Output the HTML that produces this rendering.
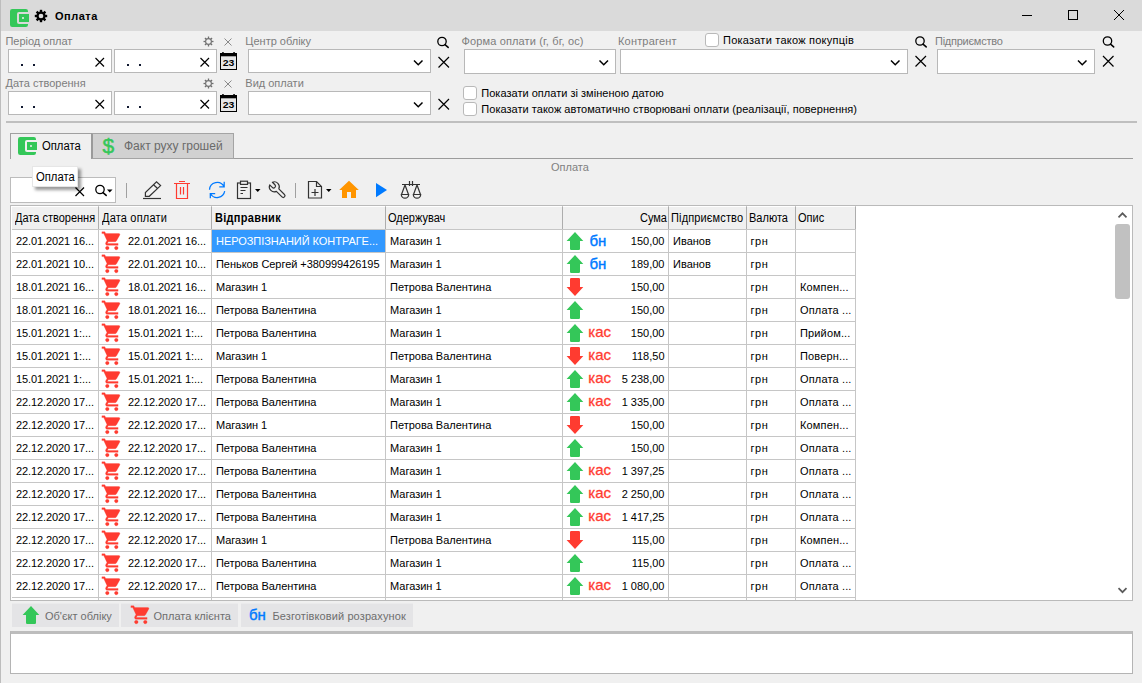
<!DOCTYPE html>
<html lang="uk"><head><meta charset="utf-8"><title>Оплата</title>
<style>
html,body{margin:0;padding:0}
body{width:1142px;height:683px;overflow:hidden;background:#f0f0f0;position:relative;font-family:"Liberation Sans",sans-serif;font-size:11px;color:#000}
.a{position:absolute}
.t{position:absolute;white-space:nowrap;line-height:1}
.lbl{color:#7d7d7d}
.inp{position:absolute;background:#fff;border:1px solid #b8b8b8;box-sizing:border-box}
.cb{position:absolute;width:14px;height:14px;box-sizing:border-box;background:#fff;border:1px solid #b9b9b9;border-radius:3px}
svg{position:absolute;overflow:visible}
.ic{fill:none;stroke:#000;stroke-width:1.3}
.hl{position:absolute;height:1px;background:#c6c6c6}
.vl{position:absolute;width:1px;background:#c6c6c6}
.c{position:absolute;white-space:nowrap;line-height:23px;height:23px;font-size:11px}
.d{letter-spacing:-0.1px}
.h{font-size:12px;transform:scaleX(0.917);transform-origin:0 0}
.r{text-align:right}
.kas{position:absolute;white-space:nowrap;line-height:1;font-size:15px;color:#ff3b30;-webkit-text-stroke:0.3px #ff3b30}
.bn{position:absolute;white-space:nowrap;line-height:1;font-size:15px;color:#007aff;-webkit-text-stroke:0.4px #007aff}
.leg{position:absolute;background:#e4e4e6;height:24px;top:603px;box-sizing:border-box;border-top:1px solid #ebebec}
.lt{position:absolute;white-space:nowrap;line-height:1;font-size:12px;color:#6e6e6e;top:610px}
</style></head>
<body>
<div class="a" style="left:0;top:0;width:1142px;height:31px;background:#dadada"></div>
<div class="a" style="left:0;top:0;width:1px;height:683px;background:#bdbdbd"></div>
<svg style="left:10px;top:9px" width="20" height="18" viewBox="0 0 20 18"><rect x="0" y="0" width="18" height="18" rx="2.2" fill="#34c759"/><path d="M9 3H19.5V15H9a2 2 0 0 1-2-2V5a2 2 0 0 1 2-2z" fill="#dadada"/><rect x="9" y="5" width="10" height="8" fill="#34c759"/><circle cx="13" cy="9" r="1" fill="#f2f2f2"/></svg>
<svg style="left:0;top:0" width="1" height="1"><g transform="translate(41 16)"><rect x="-1.18" y="-6.20" width="2.36" height="3.10" transform="rotate(0)" fill="#000"/><rect x="-1.18" y="-6.20" width="2.36" height="3.10" transform="rotate(45)" fill="#000"/><rect x="-1.18" y="-6.20" width="2.36" height="3.10" transform="rotate(90)" fill="#000"/><rect x="-1.18" y="-6.20" width="2.36" height="3.10" transform="rotate(135)" fill="#000"/><rect x="-1.18" y="-6.20" width="2.36" height="3.10" transform="rotate(180)" fill="#000"/><rect x="-1.18" y="-6.20" width="2.36" height="3.10" transform="rotate(225)" fill="#000"/><rect x="-1.18" y="-6.20" width="2.36" height="3.10" transform="rotate(270)" fill="#000"/><rect x="-1.18" y="-6.20" width="2.36" height="3.10" transform="rotate(315)" fill="#000"/><circle r="3.47" fill="none" stroke="#000" stroke-width="2.23"/></g></svg>
<div class="t " style="left:55px;top:11px;font-weight:bold;font-size:11px;letter-spacing:0.5px">Оплата</div>
<svg style="left:0;top:0" width="1" height="1"><path d="M1022 15.500H1032" stroke="#000" stroke-width="1"/><rect x="1068.500" y="10.500" width="9" height="9" fill="none" stroke="#000" stroke-width="1"/><path d="M1114 10L1124 20M1124 10L1114 20" stroke="#000" stroke-width="1"/></svg>
<div class="t lbl" style="left:5.5px;top:36px;letter-spacing:-0.05px">Період оплат</div>
<div class="t lbl" style="left:5.5px;top:78px;">Дата створення</div>
<div class="t lbl" style="left:245.3px;top:36px;">Центр обліку</div>
<div class="t lbl" style="left:245.3px;top:78px;">Вид оплати</div>
<div class="t lbl" style="left:461.5px;top:36px;letter-spacing:0.14px">Форма оплати (г, бг, ос)</div>
<div class="t lbl" style="left:618px;top:36px;letter-spacing:0.18px">Контрагент</div>
<div class="t lbl" style="left:935px;top:36px;letter-spacing:-0.25px">Підприємство</div>
<div class="t " style="left:723px;top:35px;letter-spacing:0.23px">Показати також покупців</div>
<div class="t " style="left:481.3px;top:88px;letter-spacing:0.02px">Показати оплати зі зміненою датою</div>
<div class="t " style="left:481.3px;top:104px;letter-spacing:0.03px">Показати також автоматично створювані оплати (реалізації, повернення)</div>
<div class="cb" style="left:705px;top:33px"></div>
<div class="cb" style="left:463px;top:86px"></div>
<div class="cb" style="left:463px;top:102px"></div>
<div class="inp" style="left:8px;top:49px;width:104px;height:24px"></div>
<div class="inp" style="left:114px;top:49px;width:103px;height:24px"></div>
<div class="a" style="left:21px;top:64px;width:2px;height:2px;background:#101830"></div>
<div class="a" style="left:33px;top:64px;width:2px;height:2px;background:#101830"></div>
<div class="a" style="left:127px;top:64px;width:2px;height:2px;background:#101830"></div>
<div class="a" style="left:139px;top:64px;width:2px;height:2px;background:#101830"></div>
<svg style="left:0;top:0" width="1" height="1"><path d="M95.5 58L104 66.5M104 58L95.5 66.5" fill="none" stroke="#000" stroke-width="1.2"/></svg>
<svg style="left:0;top:0" width="1" height="1"><path d="M200.5 58L209 66.5M209 58L200.5 66.5" fill="none" stroke="#000" stroke-width="1.2"/></svg>
<svg style="left:220px;top:52px" width="17" height="18" viewBox="0 0 17 18"><rect x="0.5" y="1.5" width="16" height="16" fill="#e6e6e6" stroke="#000" stroke-width="1"/><rect x="0" y="1" width="17" height="3.300" fill="#000"/><rect x="0" y="17" width="17" height="1" fill="#000"/><rect x="2.200" y="0" width="1.500" height="2" fill="#000"/><rect x="13.300" y="0" width="1.500" height="2" fill="#000"/><text x="2.700" y="14.400" textLength="11.600" lengthAdjust="spacingAndGlyphs" font-family="Liberation Sans, sans-serif" font-weight="bold" font-size="9" fill="#000">23</text></svg>
<svg style="left:0;top:0" width="1" height="1"><g transform="translate(208.5 41.5)"><path d="M0 -5V-3.2" transform="rotate(0)" stroke="#707070" stroke-width="1.3"/><path d="M0 -5V-3.2" transform="rotate(45)" stroke="#707070" stroke-width="1.3"/><path d="M0 -5V-3.2" transform="rotate(90)" stroke="#707070" stroke-width="1.3"/><path d="M0 -5V-3.2" transform="rotate(135)" stroke="#707070" stroke-width="1.3"/><path d="M0 -5V-3.2" transform="rotate(180)" stroke="#707070" stroke-width="1.3"/><path d="M0 -5V-3.2" transform="rotate(225)" stroke="#707070" stroke-width="1.3"/><path d="M0 -5V-3.2" transform="rotate(270)" stroke="#707070" stroke-width="1.3"/><path d="M0 -5V-3.2" transform="rotate(315)" stroke="#707070" stroke-width="1.3"/><circle r="2.9" fill="none" stroke="#707070" stroke-width="1.1"/></g></svg>
<svg style="left:0;top:0" width="1" height="1"><path d="M224.5 38.5L231.5 45.5M231.5 38.5L224.5 45.5" fill="none" stroke="#8a8a8a" stroke-width="1"/></svg>
<div class="inp" style="left:248px;top:49px;width:183px;height:24px"></div>
<svg style="left:0;top:0" width="1" height="1"><path d="M414 60.5L418.25 64.7L422.5 60.5" fill="none" stroke="#000" stroke-width="1.5"/></svg>
<svg style="left:0;top:0" width="1" height="1"><path d="M438.5 57L449 67.5M449 57L438.5 67.5" fill="none" stroke="#000" stroke-width="1.2"/></svg>
<div class="inp" style="left:8px;top:91px;width:104px;height:24px"></div>
<div class="inp" style="left:114px;top:91px;width:103px;height:24px"></div>
<div class="a" style="left:21px;top:106px;width:2px;height:2px;background:#101830"></div>
<div class="a" style="left:33px;top:106px;width:2px;height:2px;background:#101830"></div>
<div class="a" style="left:127px;top:106px;width:2px;height:2px;background:#101830"></div>
<div class="a" style="left:139px;top:106px;width:2px;height:2px;background:#101830"></div>
<svg style="left:0;top:0" width="1" height="1"><path d="M95.5 100L104 108.5M104 100L95.5 108.5" fill="none" stroke="#000" stroke-width="1.2"/></svg>
<svg style="left:0;top:0" width="1" height="1"><path d="M200.5 100L209 108.5M209 100L200.5 108.5" fill="none" stroke="#000" stroke-width="1.2"/></svg>
<svg style="left:220px;top:94px" width="17" height="18" viewBox="0 0 17 18"><rect x="0.5" y="1.5" width="16" height="16" fill="#e6e6e6" stroke="#000" stroke-width="1"/><rect x="0" y="1" width="17" height="3.300" fill="#000"/><rect x="0" y="17" width="17" height="1" fill="#000"/><rect x="2.200" y="0" width="1.500" height="2" fill="#000"/><rect x="13.300" y="0" width="1.500" height="2" fill="#000"/><text x="2.700" y="14.400" textLength="11.600" lengthAdjust="spacingAndGlyphs" font-family="Liberation Sans, sans-serif" font-weight="bold" font-size="9" fill="#000">23</text></svg>
<svg style="left:0;top:0" width="1" height="1"><g transform="translate(208.5 83.5)"><path d="M0 -5V-3.2" transform="rotate(0)" stroke="#707070" stroke-width="1.3"/><path d="M0 -5V-3.2" transform="rotate(45)" stroke="#707070" stroke-width="1.3"/><path d="M0 -5V-3.2" transform="rotate(90)" stroke="#707070" stroke-width="1.3"/><path d="M0 -5V-3.2" transform="rotate(135)" stroke="#707070" stroke-width="1.3"/><path d="M0 -5V-3.2" transform="rotate(180)" stroke="#707070" stroke-width="1.3"/><path d="M0 -5V-3.2" transform="rotate(225)" stroke="#707070" stroke-width="1.3"/><path d="M0 -5V-3.2" transform="rotate(270)" stroke="#707070" stroke-width="1.3"/><path d="M0 -5V-3.2" transform="rotate(315)" stroke="#707070" stroke-width="1.3"/><circle r="2.9" fill="none" stroke="#707070" stroke-width="1.1"/></g></svg>
<svg style="left:0;top:0" width="1" height="1"><path d="M224.5 80.5L231.5 87.5M231.5 80.5L224.5 87.5" fill="none" stroke="#8a8a8a" stroke-width="1"/></svg>
<div class="inp" style="left:248px;top:91px;width:183px;height:24px"></div>
<svg style="left:0;top:0" width="1" height="1"><path d="M414 102.5L418.25 106.7L422.5 102.5" fill="none" stroke="#000" stroke-width="1.5"/></svg>
<svg style="left:0;top:0" width="1" height="1"><path d="M438.5 99L449 109.5M449 99L438.5 109.5" fill="none" stroke="#000" stroke-width="1.2"/></svg>
<svg style="left:0;top:0" width="1" height="1"><circle cx="442.00" cy="41.50" r="4.20" fill="none" stroke="#000" stroke-width="1.3"/><path d="M445.00 44.60L448.20 47.40" stroke="#000" stroke-width="1.5" stroke-linecap="round"/></svg>
<div class="inp" style="left:464px;top:49px;width:152px;height:25px"></div>
<svg style="left:0;top:0" width="1" height="1"><path d="M599.5 60.5L603.75 64.7L608 60.5" fill="none" stroke="#000" stroke-width="1.5"/></svg>
<div class="inp" style="left:620px;top:49px;width:288px;height:25px"></div>
<svg style="left:0;top:0" width="1" height="1"><path d="M891 60.5L895.25 64.7L899.5 60.5" fill="none" stroke="#000" stroke-width="1.5"/></svg>
<svg style="left:0;top:0" width="1" height="1"><circle cx="920.00" cy="41.00" r="4.20" fill="none" stroke="#000" stroke-width="1.3"/><path d="M923.00 44.10L926.20 46.90" stroke="#000" stroke-width="1.5" stroke-linecap="round"/></svg>
<svg style="left:0;top:0" width="1" height="1"><path d="M915.5 56L926 66.5M926 56L915.5 66.5" fill="none" stroke="#000" stroke-width="1.2"/></svg>
<div class="inp" style="left:937px;top:49px;width:158px;height:25px"></div>
<svg style="left:0;top:0" width="1" height="1"><path d="M1078 60.5L1082.25 64.7L1086.5 60.5" fill="none" stroke="#000" stroke-width="1.5"/></svg>
<svg style="left:0;top:0" width="1" height="1"><circle cx="1107.50" cy="41.00" r="4.20" fill="none" stroke="#000" stroke-width="1.3"/><path d="M1110.50 44.10L1113.70 46.90" stroke="#000" stroke-width="1.5" stroke-linecap="round"/></svg>
<svg style="left:0;top:0" width="1" height="1"><path d="M1103 56L1113.5 66.5M1113.5 56L1103 66.5" fill="none" stroke="#000" stroke-width="1.2"/></svg>
<div class="a" style="left:6px;top:121px;width:1131px;height:2px;background:#bfbfbf"></div>
<div class="a" style="left:10px;top:133px;width:82px;height:26px;box-sizing:border-box;border:1px solid #a0a0a0;border-bottom:none;background:#f0f0f0"></div>
<div class="a" style="left:91px;top:133px;width:143px;height:26px;box-sizing:border-box;border:1px solid #a4a4a4;border-left:2px solid #9a9a9a;background:#d1d1d1"></div>
<div class="a" style="left:234px;top:158px;width:899px;height:1px;background:#9c9c9c"></div>
<svg style="left:18px;top:137px" width="20" height="18" viewBox="0 0 20 18"><rect x="0" y="0" width="18" height="18" rx="2.2" fill="#34c759"/><path d="M9 3H19.5V15H9a2 2 0 0 1-2-2V5a2 2 0 0 1 2-2z" fill="#f0f0f0"/><rect x="9" y="5" width="10" height="8" fill="#34c759"/><circle cx="13" cy="9" r="1" fill="#f2f2f2"/></svg>
<div class="t " style="left:42.3px;top:139.5px;font-size:12.5px;transform:scaleX(0.9);transform-origin:0 0">Оплата</div>
<div class="t " style="left:102.6px;top:134.5px;font-size:21px;color:#34c759;-webkit-text-stroke:0.5px #34c759">$</div>
<div class="t " style="left:124px;top:140px;font-size:12px;color:#6a6a6a">Факт руху грошей</div>
<div class="t " style="left:551px;top:162px;font-size:11px;color:#808080">Оплата</div>
<div class="inp" style="left:10px;top:177px;width:106px;height:26px;border-color:#bcbcbc"></div>
<svg style="left:0;top:0" width="1" height="1"><path d="M75.5 187.5L84 196M84 187.5L75.5 196" fill="none" stroke="#000" stroke-width="1.2"/></svg>
<svg style="left:0;top:0" width="1" height="1"><circle cx="100.00" cy="189.50" r="4.20" fill="none" stroke="#000" stroke-width="1.3"/><path d="M103.00 192.60L106.20 195.40" stroke="#000" stroke-width="1.5" stroke-linecap="round"/></svg>
<svg style="left:0;top:0" width="1" height="1"><path d="M107 189.500H112.500L109.750 192.500Z" fill="#000"/></svg>
<div class="a" style="left:126px;top:183px;width:1px;height:15px;background:#a0a0a0"></div>
<div class="a" style="left:295px;top:183px;width:1px;height:15px;background:#a0a0a0"></div>
<svg style="left:0;top:0" width="1" height="1"><g fill="none" stroke="#333" stroke-width="1.2"><path d="M143 198.500H161"/><path d="M145.400 196.300V192.500L156.500 181.800L160.600 185.600L149.300 196.300Z"/><path d="M153.500 184.700L157.600 188.500"/></g></svg>
<svg style="left:0;top:0" width="1" height="1"><g fill="none" stroke="#ff3b30" stroke-width="1.2"><path d="M179 181.500H185M174 183.500H190M176.500 183.500V198.500H187.500V183.500M180.500 187V194.600M183.500 187V194.600"/></g></svg>
<svg style="left:0;top:0" width="1" height="1"><g fill="none" stroke="#007aff" stroke-width="1.25"><path d="M209.500 189.800A7.700 7.700 0 0 1 224 186.500M224.200 181.800V186.800H219.300"/><path d="M224.700 191.200A7.700 7.700 0 0 1 210.500 193.700M210.300 198.300V193.500H215.200"/></g></svg>
<svg style="left:0;top:0" width="1" height="1"><g fill="none" stroke="#333" stroke-width="1.2"><rect x="237.500" y="183" width="13" height="15.500"/><rect x="240.500" y="181.200" width="7" height="3.200" fill="#f0f0f0"/><path d="M240.500 187.500H247.500M240.500 190.500H245.500M240.500 193.500H243"/></g><path d="M255 189H260.500L257.750 192Z" fill="#000"/></svg>
<svg style="left:0;top:0" width="1" height="1"><g transform="translate(274.3 186.800) rotate(45)" fill="none" stroke="#333" stroke-width="1.2" stroke-linejoin="round"><path d="M-4.600 -1.900A5 5 0 0 1 4.680 -1.750L12.600 -1.750A1.750 1.750 0 0 1 12.600 1.750L4.680 1.750A5 5 0 0 1 -4.600 1.900L-1 1.900A1.900 1.900 0 0 0 -1 -1.900Z"/></g></svg>
<svg style="left:0;top:0" width="1" height="1"><g fill="none" stroke="#333" stroke-width="1.2"><path d="M308.500 181.500H316.500L321.500 186.500V198H308.500Z"/><path d="M316.500 181.500V186.500H321.500"/><path d="M311.500 192.500H318.500M315 189V196"/></g><path d="M326 189H331.500L328.750 192Z" fill="#000"/></svg>
<svg style="left:0;top:0" width="1" height="1"><path d="M349 180.800L358.800 190H356V198H351V192H347V198H342V190H339.200Z" fill="#ff9500"/></svg>
<svg style="left:0;top:0" width="1" height="1"><path d="M376 183L387 190L376 197.300Z" fill="#007aff"/></svg>
<svg style="left:0;top:0" width="1" height="1"><g fill="none" stroke="#333" stroke-width="1.2"><path d="M402 184.500H420M409.500 181V186M412.500 181V186"/><path d="M405 185L401.500 194.500M405 185L408.500 194.500M417 185L413.500 194.500M417 185L420.500 194.500"/><path d="M401.300 194.500H408.700A3.700 3.700 0 0 1 401.300 194.500ZM413.300 194.500H420.700A3.700 3.700 0 0 1 413.300 194.500Z"/></g></svg>
<div class="a" style="left:10px;top:205px;width:1123px;height:396px;box-sizing:border-box;border:1px solid #bababa;background:#fff"></div>
<div class="a" style="left:12px;top:207px;width:843px;height:22px;background:#f0f0f0"></div>
<div class="hl" style="left:12px;top:229px;width:844px"></div>
<div class="hl" style="left:12px;top:252px;width:844px"></div>
<div class="hl" style="left:12px;top:275px;width:844px"></div>
<div class="hl" style="left:12px;top:298px;width:844px"></div>
<div class="hl" style="left:12px;top:321px;width:844px"></div>
<div class="hl" style="left:12px;top:344px;width:844px"></div>
<div class="hl" style="left:12px;top:367px;width:844px"></div>
<div class="hl" style="left:12px;top:390px;width:844px"></div>
<div class="hl" style="left:12px;top:413px;width:844px"></div>
<div class="hl" style="left:12px;top:436px;width:844px"></div>
<div class="hl" style="left:12px;top:459px;width:844px"></div>
<div class="hl" style="left:12px;top:482px;width:844px"></div>
<div class="hl" style="left:12px;top:505px;width:844px"></div>
<div class="hl" style="left:12px;top:528px;width:844px"></div>
<div class="hl" style="left:12px;top:551px;width:844px"></div>
<div class="hl" style="left:12px;top:574px;width:844px"></div>
<div class="hl" style="left:12px;top:597px;width:844px"></div>
<div class="vl" style="left:98px;top:206px;height:394px"></div>
<div class="vl" style="left:211px;top:206px;height:394px"></div>
<div class="vl" style="left:385px;top:206px;height:394px"></div>
<div class="vl" style="left:562px;top:206px;height:394px"></div>
<div class="vl" style="left:668px;top:206px;height:394px"></div>
<div class="vl" style="left:746px;top:206px;height:394px"></div>
<div class="vl" style="left:795px;top:206px;height:394px"></div>
<div class="vl" style="left:855px;top:206px;height:394px"></div>
<div class="vl" style="left:98px;top:207px;height:22px;background:#adadad"></div>
<div class="vl" style="left:211px;top:207px;height:22px;background:#adadad"></div>
<div class="vl" style="left:385px;top:207px;height:22px;background:#adadad"></div>
<div class="vl" style="left:562px;top:207px;height:22px;background:#adadad"></div>
<div class="vl" style="left:668px;top:207px;height:22px;background:#adadad"></div>
<div class="vl" style="left:746px;top:207px;height:22px;background:#adadad"></div>
<div class="vl" style="left:795px;top:207px;height:22px;background:#adadad"></div>
<div class="vl" style="left:855px;top:207px;height:22px;background:#adadad"></div>
<div class="c h" style="left:15px;top:207px;">Дата створення</div>
<div class="c h" style="left:102px;top:207px;letter-spacing:0.2px">Дата оплати</div>
<div class="c h" style="left:214.5px;top:207px;font-weight:bold;letter-spacing:0.3px">Відправник</div>
<div class="c h" style="left:388px;top:207px;">Одержувач</div>
<div class="c h" style="left:671px;top:207px;letter-spacing:0.15px">Підприємство</div>
<div class="c h" style="left:749px;top:207px;">Валюта</div>
<div class="c h" style="left:798px;top:207px;">Опис</div>
<div class="c r h" style="left:600px;width:67px;top:207px;transform-origin:100% 0">Сума</div>
<div class="a" style="left:212px;top:230px;width:173px;height:22px;background:#3399ff"></div>
<div class="c d" style="left:16px;top:230px">22.01.2021 16...</div>
<svg style="left:101.10px;top:230.40px" width="21.60" height="21.60" viewBox="0 0 24 24"><path fill="#ff3b30" stroke="#ff3b30" stroke-width="0.3" d="M7 18c-1.1 0-1.99.9-1.99 2S5.900 22 7 22s2-.9 2-2-.9-2-2-2zM1 2v2h2l3.600 7.590-1.350 2.450c-.16.28-.25.61-.25.96 0 1.100.9 2 2 2h12v-2H7.420c-.14 0-.25-.11-.25-.25l.03-.12.9-1.630h7.450c.75 0 1.410-.41 1.750-1.030l3.580-6.490c.08-.14.12-.31.12-.48 0-.55-.45-1-1-1H5.210l-.94-2H1zm16 16c-1.100 0-1.990.9-1.990 2s.89 2 1.990 2 2-.9 2-2-.9-2-2-2z"/></svg>
<div class="c d" style="left:128px;top:230px">22.01.2021 16...</div>
<div class="c" style="left:216px;top:230px;letter-spacing:-0.05px;color:#fff">НЕРОЗПІЗНАНИЙ КОНТРАГЕ...</div>
<div class="c" style="left:390px;top:230px">Магазин 1</div>
<svg style="left:566px;top:232px" width="18" height="18" viewBox="0 0 18 18"><path fill="#34c759" d="M9 0L17.300 9.100H14V16.800a1.2 1.2 0 0 1-1.200 1.200H5.200a1.2 1.2 0 0 1-1.200-1.200V9.100H0.600Z"/></svg>
<div class="bn" style="left:589.5px;top:233px">бн</div>
<div class="c r" style="left:600px;width:64.5px;top:230px">150,00</div>
<div class="c" style="left:673px;top:230px">Иванов</div>
<div class="c" style="left:750.5px;top:230px;letter-spacing:0.5px">грн</div>
<div class="c d" style="left:16px;top:253px">22.01.2021 10...</div>
<svg style="left:101.10px;top:253.40px" width="21.60" height="21.60" viewBox="0 0 24 24"><path fill="#ff3b30" stroke="#ff3b30" stroke-width="0.3" d="M7 18c-1.1 0-1.99.9-1.99 2S5.900 22 7 22s2-.9 2-2-.9-2-2-2zM1 2v2h2l3.600 7.590-1.350 2.450c-.16.28-.25.61-.25.96 0 1.100.9 2 2 2h12v-2H7.420c-.14 0-.25-.11-.25-.25l.03-.12.9-1.630h7.450c.75 0 1.410-.41 1.750-1.030l3.580-6.490c.08-.14.12-.31.12-.48 0-.55-.45-1-1-1H5.210l-.94-2H1zm16 16c-1.100 0-1.990.9-1.990 2s.89 2 1.990 2 2-.9 2-2-.9-2-2-2z"/></svg>
<div class="c d" style="left:128px;top:253px">22.01.2021 10...</div>
<div class="c" style="left:216px;top:253px;letter-spacing:-0.05px;">Пеньков Сергей +380999426195</div>
<div class="c" style="left:390px;top:253px">Магазин 1</div>
<svg style="left:566px;top:255px" width="18" height="18" viewBox="0 0 18 18"><path fill="#34c759" d="M9 0L17.300 9.100H14V16.800a1.2 1.2 0 0 1-1.200 1.200H5.200a1.2 1.2 0 0 1-1.200-1.200V9.100H0.600Z"/></svg>
<div class="bn" style="left:589.5px;top:256px">бн</div>
<div class="c r" style="left:600px;width:64.5px;top:253px">189,00</div>
<div class="c" style="left:673px;top:253px">Иванов</div>
<div class="c" style="left:750.5px;top:253px;letter-spacing:0.5px">грн</div>
<div class="c d" style="left:16px;top:276px">18.01.2021 16...</div>
<svg style="left:101.10px;top:276.40px" width="21.60" height="21.60" viewBox="0 0 24 24"><path fill="#ff3b30" stroke="#ff3b30" stroke-width="0.3" d="M7 18c-1.1 0-1.99.9-1.99 2S5.900 22 7 22s2-.9 2-2-.9-2-2-2zM1 2v2h2l3.600 7.590-1.350 2.450c-.16.28-.25.61-.25.96 0 1.100.9 2 2 2h12v-2H7.420c-.14 0-.25-.11-.25-.25l.03-.12.9-1.630h7.450c.75 0 1.410-.41 1.750-1.030l3.580-6.490c.08-.14.12-.31.12-.48 0-.55-.45-1-1-1H5.210l-.94-2H1zm16 16c-1.100 0-1.990.9-1.990 2s.89 2 1.990 2 2-.9 2-2-.9-2-2-2z"/></svg>
<div class="c d" style="left:128px;top:276px">18.01.2021 16...</div>
<div class="c" style="left:216px;top:276px;letter-spacing:-0.05px;">Магазин 1</div>
<div class="c" style="left:390px;top:276px">Петрова Валентина</div>
<svg style="left:566px;top:278px" width="18" height="18" viewBox="0 0 18 18"><path fill="#ff3b30" d="M9 18L17.300 8.900H14V1.200a1.2 1.2 0 0 0-1.200-1.200H5.200a1.2 1.2 0 0 0-1.200 1.200V8.900H0.600Z"/></svg>
<div class="c r" style="left:600px;width:64.5px;top:276px">150,00</div>
<div class="c" style="left:750.5px;top:276px;letter-spacing:0.5px">грн</div>
<div class="c" style="left:800px;top:276px;letter-spacing:0.15px">Компен...</div>
<div class="c d" style="left:16px;top:299px">18.01.2021 16...</div>
<svg style="left:101.10px;top:299.40px" width="21.60" height="21.60" viewBox="0 0 24 24"><path fill="#ff3b30" stroke="#ff3b30" stroke-width="0.3" d="M7 18c-1.1 0-1.99.9-1.99 2S5.900 22 7 22s2-.9 2-2-.9-2-2-2zM1 2v2h2l3.600 7.590-1.350 2.450c-.16.28-.25.61-.25.96 0 1.100.9 2 2 2h12v-2H7.420c-.14 0-.25-.11-.25-.25l.03-.12.9-1.630h7.450c.75 0 1.410-.41 1.750-1.030l3.580-6.490c.08-.14.12-.31.12-.48 0-.55-.45-1-1-1H5.210l-.94-2H1zm16 16c-1.100 0-1.990.9-1.990 2s.89 2 1.990 2 2-.9 2-2-.9-2-2-2z"/></svg>
<div class="c d" style="left:128px;top:299px">18.01.2021 16...</div>
<div class="c" style="left:216px;top:299px;letter-spacing:-0.05px;">Петрова Валентина</div>
<div class="c" style="left:390px;top:299px">Магазин 1</div>
<svg style="left:566px;top:301px" width="18" height="18" viewBox="0 0 18 18"><path fill="#34c759" d="M9 0L17.300 9.100H14V16.800a1.2 1.2 0 0 1-1.200 1.200H5.200a1.2 1.2 0 0 1-1.200-1.200V9.100H0.600Z"/></svg>
<div class="c r" style="left:600px;width:64.5px;top:299px">150,00</div>
<div class="c" style="left:750.5px;top:299px;letter-spacing:0.5px">грн</div>
<div class="c" style="left:800px;top:299px;letter-spacing:0.15px">Оплата ...</div>
<div class="c d" style="left:16px;top:322px">15.01.2021 1:...</div>
<svg style="left:101.10px;top:322.40px" width="21.60" height="21.60" viewBox="0 0 24 24"><path fill="#ff3b30" stroke="#ff3b30" stroke-width="0.3" d="M7 18c-1.1 0-1.99.9-1.99 2S5.900 22 7 22s2-.9 2-2-.9-2-2-2zM1 2v2h2l3.600 7.590-1.350 2.450c-.16.28-.25.61-.25.96 0 1.100.9 2 2 2h12v-2H7.420c-.14 0-.25-.11-.25-.25l.03-.12.9-1.630h7.450c.75 0 1.410-.41 1.750-1.030l3.580-6.490c.08-.14.12-.31.12-.48 0-.55-.45-1-1-1H5.210l-.94-2H1zm16 16c-1.100 0-1.990.9-1.990 2s.89 2 1.990 2 2-.9 2-2-.9-2-2-2z"/></svg>
<div class="c d" style="left:128px;top:322px">15.01.2021 1:...</div>
<div class="c" style="left:216px;top:322px;letter-spacing:-0.05px;">Петрова Валентина</div>
<div class="c" style="left:390px;top:322px">Магазин 1</div>
<svg style="left:566px;top:324px" width="18" height="18" viewBox="0 0 18 18"><path fill="#34c759" d="M9 0L17.300 9.100H14V16.800a1.2 1.2 0 0 1-1.200 1.200H5.200a1.2 1.2 0 0 1-1.200-1.200V9.100H0.600Z"/></svg>
<div class="kas" style="left:588.3px;top:324px">кас</div>
<div class="c r" style="left:600px;width:64.5px;top:322px">150,00</div>
<div class="c" style="left:750.5px;top:322px;letter-spacing:0.5px">грн</div>
<div class="c" style="left:800px;top:322px;letter-spacing:0.15px">Прийом...</div>
<div class="c d" style="left:16px;top:345px">15.01.2021 1:...</div>
<svg style="left:101.10px;top:345.40px" width="21.60" height="21.60" viewBox="0 0 24 24"><path fill="#ff3b30" stroke="#ff3b30" stroke-width="0.3" d="M7 18c-1.1 0-1.99.9-1.99 2S5.900 22 7 22s2-.9 2-2-.9-2-2-2zM1 2v2h2l3.600 7.590-1.350 2.450c-.16.28-.25.61-.25.96 0 1.100.9 2 2 2h12v-2H7.420c-.14 0-.25-.11-.25-.25l.03-.12.9-1.630h7.450c.75 0 1.410-.41 1.750-1.030l3.580-6.490c.08-.14.12-.31.12-.48 0-.55-.45-1-1-1H5.210l-.94-2H1zm16 16c-1.100 0-1.990.9-1.990 2s.89 2 1.990 2 2-.9 2-2-.9-2-2-2z"/></svg>
<div class="c d" style="left:128px;top:345px">15.01.2021 1:...</div>
<div class="c" style="left:216px;top:345px;letter-spacing:-0.05px;">Магазин 1</div>
<div class="c" style="left:390px;top:345px">Петрова Валентина</div>
<svg style="left:566px;top:347px" width="18" height="18" viewBox="0 0 18 18"><path fill="#ff3b30" d="M9 18L17.300 8.900H14V1.200a1.2 1.2 0 0 0-1.200-1.200H5.200a1.2 1.2 0 0 0-1.200 1.200V8.900H0.600Z"/></svg>
<div class="kas" style="left:588.3px;top:347px">кас</div>
<div class="c r" style="left:600px;width:64.5px;top:345px">118,50</div>
<div class="c" style="left:750.5px;top:345px;letter-spacing:0.5px">грн</div>
<div class="c" style="left:800px;top:345px;letter-spacing:0.15px">Поверн...</div>
<div class="c d" style="left:16px;top:368px">15.01.2021 1:...</div>
<svg style="left:101.10px;top:368.40px" width="21.60" height="21.60" viewBox="0 0 24 24"><path fill="#ff3b30" stroke="#ff3b30" stroke-width="0.3" d="M7 18c-1.1 0-1.99.9-1.99 2S5.900 22 7 22s2-.9 2-2-.9-2-2-2zM1 2v2h2l3.600 7.590-1.350 2.450c-.16.28-.25.61-.25.96 0 1.100.9 2 2 2h12v-2H7.420c-.14 0-.25-.11-.25-.25l.03-.12.9-1.630h7.450c.75 0 1.410-.41 1.750-1.030l3.580-6.490c.08-.14.12-.31.12-.48 0-.55-.45-1-1-1H5.210l-.94-2H1zm16 16c-1.100 0-1.990.9-1.990 2s.89 2 1.990 2 2-.9 2-2-.9-2-2-2z"/></svg>
<div class="c d" style="left:128px;top:368px">15.01.2021 1:...</div>
<div class="c" style="left:216px;top:368px;letter-spacing:-0.05px;">Петрова Валентина</div>
<div class="c" style="left:390px;top:368px">Магазин 1</div>
<svg style="left:566px;top:370px" width="18" height="18" viewBox="0 0 18 18"><path fill="#34c759" d="M9 0L17.300 9.100H14V16.800a1.2 1.2 0 0 1-1.200 1.200H5.200a1.2 1.2 0 0 1-1.200-1.200V9.100H0.600Z"/></svg>
<div class="kas" style="left:588.3px;top:370px">кас</div>
<div class="c r" style="left:600px;width:64.5px;top:368px">5 238,00</div>
<div class="c" style="left:750.5px;top:368px;letter-spacing:0.5px">грн</div>
<div class="c" style="left:800px;top:368px;letter-spacing:0.15px">Оплата ...</div>
<div class="c d" style="left:16px;top:391px">22.12.2020 17...</div>
<svg style="left:101.10px;top:391.40px" width="21.60" height="21.60" viewBox="0 0 24 24"><path fill="#ff3b30" stroke="#ff3b30" stroke-width="0.3" d="M7 18c-1.1 0-1.99.9-1.99 2S5.900 22 7 22s2-.9 2-2-.9-2-2-2zM1 2v2h2l3.600 7.590-1.350 2.450c-.16.28-.25.61-.25.96 0 1.100.9 2 2 2h12v-2H7.420c-.14 0-.25-.11-.25-.25l.03-.12.9-1.630h7.450c.75 0 1.410-.41 1.750-1.030l3.580-6.490c.08-.14.12-.31.12-.48 0-.55-.45-1-1-1H5.210l-.94-2H1zm16 16c-1.100 0-1.990.9-1.990 2s.89 2 1.990 2 2-.9 2-2-.9-2-2-2z"/></svg>
<div class="c d" style="left:128px;top:391px">22.12.2020 17...</div>
<div class="c" style="left:216px;top:391px;letter-spacing:-0.05px;">Петрова Валентина</div>
<div class="c" style="left:390px;top:391px">Магазин 1</div>
<svg style="left:566px;top:393px" width="18" height="18" viewBox="0 0 18 18"><path fill="#34c759" d="M9 0L17.300 9.100H14V16.800a1.2 1.2 0 0 1-1.200 1.200H5.200a1.2 1.2 0 0 1-1.200-1.200V9.100H0.600Z"/></svg>
<div class="kas" style="left:588.3px;top:393px">кас</div>
<div class="c r" style="left:600px;width:64.5px;top:391px">1 335,00</div>
<div class="c" style="left:750.5px;top:391px;letter-spacing:0.5px">грн</div>
<div class="c" style="left:800px;top:391px;letter-spacing:0.15px">Оплата ...</div>
<div class="c d" style="left:16px;top:414px">22.12.2020 17...</div>
<svg style="left:101.10px;top:414.40px" width="21.60" height="21.60" viewBox="0 0 24 24"><path fill="#ff3b30" stroke="#ff3b30" stroke-width="0.3" d="M7 18c-1.1 0-1.99.9-1.99 2S5.900 22 7 22s2-.9 2-2-.9-2-2-2zM1 2v2h2l3.600 7.590-1.350 2.450c-.16.28-.25.61-.25.96 0 1.100.9 2 2 2h12v-2H7.420c-.14 0-.25-.11-.25-.25l.03-.12.9-1.630h7.450c.75 0 1.410-.41 1.750-1.030l3.580-6.490c.08-.14.12-.31.12-.48 0-.55-.45-1-1-1H5.210l-.94-2H1zm16 16c-1.100 0-1.990.9-1.990 2s.89 2 1.990 2 2-.9 2-2-.9-2-2-2z"/></svg>
<div class="c d" style="left:128px;top:414px">22.12.2020 17...</div>
<div class="c" style="left:216px;top:414px;letter-spacing:-0.05px;">Магазин 1</div>
<div class="c" style="left:390px;top:414px">Петрова Валентина</div>
<svg style="left:566px;top:416px" width="18" height="18" viewBox="0 0 18 18"><path fill="#ff3b30" d="M9 18L17.300 8.900H14V1.200a1.2 1.2 0 0 0-1.200-1.200H5.200a1.2 1.2 0 0 0-1.200 1.200V8.900H0.600Z"/></svg>
<div class="c r" style="left:600px;width:64.5px;top:414px">150,00</div>
<div class="c" style="left:750.5px;top:414px;letter-spacing:0.5px">грн</div>
<div class="c" style="left:800px;top:414px;letter-spacing:0.15px">Компен...</div>
<div class="c d" style="left:16px;top:437px">22.12.2020 17...</div>
<svg style="left:101.10px;top:437.40px" width="21.60" height="21.60" viewBox="0 0 24 24"><path fill="#ff3b30" stroke="#ff3b30" stroke-width="0.3" d="M7 18c-1.1 0-1.99.9-1.99 2S5.900 22 7 22s2-.9 2-2-.9-2-2-2zM1 2v2h2l3.600 7.590-1.350 2.450c-.16.28-.25.61-.25.96 0 1.100.9 2 2 2h12v-2H7.420c-.14 0-.25-.11-.25-.25l.03-.12.9-1.630h7.450c.75 0 1.410-.41 1.750-1.030l3.580-6.490c.08-.14.12-.31.12-.48 0-.55-.45-1-1-1H5.210l-.94-2H1zm16 16c-1.100 0-1.990.9-1.990 2s.89 2 1.990 2 2-.9 2-2-.9-2-2-2z"/></svg>
<div class="c d" style="left:128px;top:437px">22.12.2020 17...</div>
<div class="c" style="left:216px;top:437px;letter-spacing:-0.05px;">Петрова Валентина</div>
<div class="c" style="left:390px;top:437px">Магазин 1</div>
<svg style="left:566px;top:439px" width="18" height="18" viewBox="0 0 18 18"><path fill="#34c759" d="M9 0L17.300 9.100H14V16.800a1.2 1.2 0 0 1-1.200 1.200H5.200a1.2 1.2 0 0 1-1.200-1.200V9.100H0.600Z"/></svg>
<div class="c r" style="left:600px;width:64.5px;top:437px">150,00</div>
<div class="c" style="left:750.5px;top:437px;letter-spacing:0.5px">грн</div>
<div class="c" style="left:800px;top:437px;letter-spacing:0.15px">Оплата ...</div>
<div class="c d" style="left:16px;top:460px">22.12.2020 17...</div>
<svg style="left:101.10px;top:460.40px" width="21.60" height="21.60" viewBox="0 0 24 24"><path fill="#ff3b30" stroke="#ff3b30" stroke-width="0.3" d="M7 18c-1.1 0-1.99.9-1.99 2S5.900 22 7 22s2-.9 2-2-.9-2-2-2zM1 2v2h2l3.600 7.590-1.350 2.450c-.16.28-.25.61-.25.96 0 1.100.9 2 2 2h12v-2H7.420c-.14 0-.25-.11-.25-.25l.03-.12.9-1.630h7.450c.75 0 1.410-.41 1.750-1.030l3.580-6.490c.08-.14.12-.31.12-.48 0-.55-.45-1-1-1H5.210l-.94-2H1zm16 16c-1.100 0-1.990.9-1.990 2s.89 2 1.990 2 2-.9 2-2-.9-2-2-2z"/></svg>
<div class="c d" style="left:128px;top:460px">22.12.2020 17...</div>
<div class="c" style="left:216px;top:460px;letter-spacing:-0.05px;">Петрова Валентина</div>
<div class="c" style="left:390px;top:460px">Магазин 1</div>
<svg style="left:566px;top:462px" width="18" height="18" viewBox="0 0 18 18"><path fill="#34c759" d="M9 0L17.300 9.100H14V16.800a1.2 1.2 0 0 1-1.200 1.200H5.200a1.2 1.2 0 0 1-1.200-1.200V9.100H0.600Z"/></svg>
<div class="kas" style="left:588.3px;top:462px">кас</div>
<div class="c r" style="left:600px;width:64.5px;top:460px">1 397,25</div>
<div class="c" style="left:750.5px;top:460px;letter-spacing:0.5px">грн</div>
<div class="c" style="left:800px;top:460px;letter-spacing:0.15px">Оплата ...</div>
<div class="c d" style="left:16px;top:483px">22.12.2020 17...</div>
<svg style="left:101.10px;top:483.40px" width="21.60" height="21.60" viewBox="0 0 24 24"><path fill="#ff3b30" stroke="#ff3b30" stroke-width="0.3" d="M7 18c-1.1 0-1.99.9-1.99 2S5.900 22 7 22s2-.9 2-2-.9-2-2-2zM1 2v2h2l3.600 7.590-1.350 2.450c-.16.28-.25.61-.25.96 0 1.100.9 2 2 2h12v-2H7.420c-.14 0-.25-.11-.25-.25l.03-.12.9-1.630h7.450c.75 0 1.410-.41 1.750-1.030l3.580-6.490c.08-.14.12-.31.12-.48 0-.55-.45-1-1-1H5.210l-.94-2H1zm16 16c-1.100 0-1.990.9-1.990 2s.89 2 1.990 2 2-.9 2-2-.9-2-2-2z"/></svg>
<div class="c d" style="left:128px;top:483px">22.12.2020 17...</div>
<div class="c" style="left:216px;top:483px;letter-spacing:-0.05px;">Петрова Валентина</div>
<div class="c" style="left:390px;top:483px">Магазин 1</div>
<svg style="left:566px;top:485px" width="18" height="18" viewBox="0 0 18 18"><path fill="#34c759" d="M9 0L17.300 9.100H14V16.800a1.2 1.2 0 0 1-1.200 1.200H5.200a1.2 1.2 0 0 1-1.200-1.200V9.100H0.600Z"/></svg>
<div class="kas" style="left:588.3px;top:485px">кас</div>
<div class="c r" style="left:600px;width:64.5px;top:483px">2 250,00</div>
<div class="c" style="left:750.5px;top:483px;letter-spacing:0.5px">грн</div>
<div class="c" style="left:800px;top:483px;letter-spacing:0.15px">Оплата ...</div>
<div class="c d" style="left:16px;top:506px">22.12.2020 17...</div>
<svg style="left:101.10px;top:506.40px" width="21.60" height="21.60" viewBox="0 0 24 24"><path fill="#ff3b30" stroke="#ff3b30" stroke-width="0.3" d="M7 18c-1.1 0-1.99.9-1.99 2S5.900 22 7 22s2-.9 2-2-.9-2-2-2zM1 2v2h2l3.600 7.590-1.350 2.450c-.16.28-.25.61-.25.96 0 1.100.9 2 2 2h12v-2H7.420c-.14 0-.25-.11-.25-.25l.03-.12.9-1.630h7.450c.75 0 1.410-.41 1.750-1.030l3.580-6.490c.08-.14.12-.31.12-.48 0-.55-.45-1-1-1H5.210l-.94-2H1zm16 16c-1.100 0-1.990.9-1.990 2s.89 2 1.990 2 2-.9 2-2-.9-2-2-2z"/></svg>
<div class="c d" style="left:128px;top:506px">22.12.2020 17...</div>
<div class="c" style="left:216px;top:506px;letter-spacing:-0.05px;">Петрова Валентина</div>
<div class="c" style="left:390px;top:506px">Магазин 1</div>
<svg style="left:566px;top:508px" width="18" height="18" viewBox="0 0 18 18"><path fill="#34c759" d="M9 0L17.300 9.100H14V16.800a1.2 1.2 0 0 1-1.200 1.200H5.200a1.2 1.2 0 0 1-1.200-1.200V9.100H0.600Z"/></svg>
<div class="kas" style="left:588.3px;top:508px">кас</div>
<div class="c r" style="left:600px;width:64.5px;top:506px">1 417,25</div>
<div class="c" style="left:750.5px;top:506px;letter-spacing:0.5px">грн</div>
<div class="c" style="left:800px;top:506px;letter-spacing:0.15px">Оплата ...</div>
<div class="c d" style="left:16px;top:529px">22.12.2020 17...</div>
<svg style="left:101.10px;top:529.40px" width="21.60" height="21.60" viewBox="0 0 24 24"><path fill="#ff3b30" stroke="#ff3b30" stroke-width="0.3" d="M7 18c-1.1 0-1.99.9-1.99 2S5.900 22 7 22s2-.9 2-2-.9-2-2-2zM1 2v2h2l3.600 7.590-1.350 2.450c-.16.28-.25.61-.25.96 0 1.100.9 2 2 2h12v-2H7.420c-.14 0-.25-.11-.25-.25l.03-.12.9-1.630h7.450c.75 0 1.410-.41 1.750-1.030l3.580-6.490c.08-.14.12-.31.12-.48 0-.55-.45-1-1-1H5.210l-.94-2H1zm16 16c-1.100 0-1.990.9-1.990 2s.89 2 1.990 2 2-.9 2-2-.9-2-2-2z"/></svg>
<div class="c d" style="left:128px;top:529px">22.12.2020 17...</div>
<div class="c" style="left:216px;top:529px;letter-spacing:-0.05px;">Магазин 1</div>
<div class="c" style="left:390px;top:529px">Петрова Валентина</div>
<svg style="left:566px;top:531px" width="18" height="18" viewBox="0 0 18 18"><path fill="#ff3b30" d="M9 18L17.300 8.900H14V1.200a1.2 1.2 0 0 0-1.200-1.200H5.200a1.2 1.2 0 0 0-1.200 1.200V8.900H0.600Z"/></svg>
<div class="c r" style="left:600px;width:64.5px;top:529px">115,00</div>
<div class="c" style="left:750.5px;top:529px;letter-spacing:0.5px">грн</div>
<div class="c" style="left:800px;top:529px;letter-spacing:0.15px">Компен...</div>
<div class="c d" style="left:16px;top:552px">22.12.2020 17...</div>
<svg style="left:101.10px;top:552.40px" width="21.60" height="21.60" viewBox="0 0 24 24"><path fill="#ff3b30" stroke="#ff3b30" stroke-width="0.3" d="M7 18c-1.1 0-1.99.9-1.99 2S5.900 22 7 22s2-.9 2-2-.9-2-2-2zM1 2v2h2l3.600 7.590-1.350 2.450c-.16.28-.25.61-.25.96 0 1.100.9 2 2 2h12v-2H7.420c-.14 0-.25-.11-.25-.25l.03-.12.9-1.630h7.450c.75 0 1.410-.41 1.750-1.030l3.580-6.490c.08-.14.12-.31.12-.48 0-.55-.45-1-1-1H5.210l-.94-2H1zm16 16c-1.100 0-1.990.9-1.990 2s.89 2 1.990 2 2-.9 2-2-.9-2-2-2z"/></svg>
<div class="c d" style="left:128px;top:552px">22.12.2020 17...</div>
<div class="c" style="left:216px;top:552px;letter-spacing:-0.05px;">Петрова Валентина</div>
<div class="c" style="left:390px;top:552px">Магазин 1</div>
<svg style="left:566px;top:554px" width="18" height="18" viewBox="0 0 18 18"><path fill="#34c759" d="M9 0L17.300 9.100H14V16.800a1.2 1.2 0 0 1-1.200 1.200H5.200a1.2 1.2 0 0 1-1.200-1.200V9.100H0.600Z"/></svg>
<div class="c r" style="left:600px;width:64.5px;top:552px">115,00</div>
<div class="c" style="left:750.5px;top:552px;letter-spacing:0.5px">грн</div>
<div class="c" style="left:800px;top:552px;letter-spacing:0.15px">Оплата ...</div>
<div class="c d" style="left:16px;top:575px">22.12.2020 17...</div>
<svg style="left:101.10px;top:575.40px" width="21.60" height="21.60" viewBox="0 0 24 24"><path fill="#ff3b30" stroke="#ff3b30" stroke-width="0.3" d="M7 18c-1.1 0-1.99.9-1.99 2S5.900 22 7 22s2-.9 2-2-.9-2-2-2zM1 2v2h2l3.600 7.590-1.350 2.450c-.16.28-.25.61-.25.96 0 1.100.9 2 2 2h12v-2H7.420c-.14 0-.25-.11-.25-.25l.03-.12.9-1.630h7.450c.75 0 1.410-.41 1.750-1.030l3.580-6.490c.08-.14.12-.31.12-.48 0-.55-.45-1-1-1H5.210l-.94-2H1zm16 16c-1.100 0-1.990.9-1.990 2s.89 2 1.990 2 2-.9 2-2-.9-2-2-2z"/></svg>
<div class="c d" style="left:128px;top:575px">22.12.2020 17...</div>
<div class="c" style="left:216px;top:575px;letter-spacing:-0.05px;">Петрова Валентина</div>
<div class="c" style="left:390px;top:575px">Магазин 1</div>
<svg style="left:566px;top:577px" width="18" height="18" viewBox="0 0 18 18"><path fill="#34c759" d="M9 0L17.300 9.100H14V16.800a1.2 1.2 0 0 1-1.200 1.200H5.200a1.2 1.2 0 0 1-1.200-1.200V9.100H0.600Z"/></svg>
<div class="kas" style="left:588.3px;top:577px">кас</div>
<div class="c r" style="left:600px;width:64.5px;top:575px">1 080,00</div>
<div class="c" style="left:750.5px;top:575px;letter-spacing:0.5px">грн</div>
<div class="c" style="left:800px;top:575px;letter-spacing:0.15px">Оплата ...</div>
<div class="a" style="left:1115px;top:224px;width:15px;height:75px;border-radius:3px;background:#c1c1c1"></div>
<svg style="left:0;top:0" width="1" height="1"><path d="M1118.5 217.3L1122.5 213.3L1126.5 217.3" fill="none" stroke="#5a5a5a" stroke-width="1.7"/></svg>
<svg style="left:0;top:0" width="1" height="1"><path d="M1118.5 588.2L1122.5 592.2L1126.5 588.2" fill="none" stroke="#5a5a5a" stroke-width="1.7"/></svg>
<div class="leg" style="left:12px;width:107px"></div>
<div class="leg" style="left:121px;width:117px"></div>
<div class="leg" style="left:241px;width:172px"></div>
<svg style="left:22px;top:605.8px" width="18" height="18" viewBox="0 0 18 18"><path fill="#34c759" d="M9 0L17.300 9.100H14V16.800a1.2 1.2 0 0 1-1.200 1.200H5.200a1.2 1.2 0 0 1-1.200-1.200V9.100H0.600Z"/></svg>
<div class="t " style="left:45px;top:611px;font-size:11px;color:#6e6e6e">Об'єкт обліку</div>
<svg style="left:130.10px;top:604.40px" width="21.60" height="21.60" viewBox="0 0 24 24"><path fill="#ff3b30" stroke="#ff3b30" stroke-width="0.3" d="M7 18c-1.1 0-1.99.9-1.99 2S5.900 22 7 22s2-.9 2-2-.9-2-2-2zM1 2v2h2l3.600 7.590-1.350 2.450c-.16.28-.25.61-.25.96 0 1.100.9 2 2 2h12v-2H7.420c-.14 0-.25-.11-.25-.25l.03-.12.9-1.630h7.450c.75 0 1.410-.41 1.750-1.030l3.580-6.490c.08-.14.12-.31.12-.48 0-.55-.45-1-1-1H5.210l-.94-2H1zm16 16c-1.100 0-1.990.9-1.990 2s.89 2 1.990 2 2-.9 2-2-.9-2-2-2z"/></svg>
<div class="t " style="left:153.5px;top:611px;font-size:11px;color:#6e6e6e">Оплата клієнта</div>
<div class="t " style="left:249px;top:607px;font-size:15px;color:#007aff;-webkit-text-stroke:0.4px #007aff">бн</div>
<div class="t " style="left:272.5px;top:611px;font-size:11px;color:#6e6e6e;letter-spacing:0.11px">Безготівковий розрахунок</div>
<div class="a" style="left:10px;top:631px;width:1123px;height:43px;box-sizing:border-box;border:1px solid #b4b4b4;border-top:3px solid #bdbdbd;background:#fff"></div>
<div class="a" style="left:32px;top:166px;width:46px;height:21px;box-sizing:border-box;border:1px solid #e6e6e6;background:#fff;box-shadow:3px 3px 3px rgba(0,0,0,0.4)"></div>
<div class="t " style="left:35.8px;top:170.5px;font-size:12.5px;transform:scaleX(0.9);transform-origin:0 0">Оплата</div>
</body></html>
